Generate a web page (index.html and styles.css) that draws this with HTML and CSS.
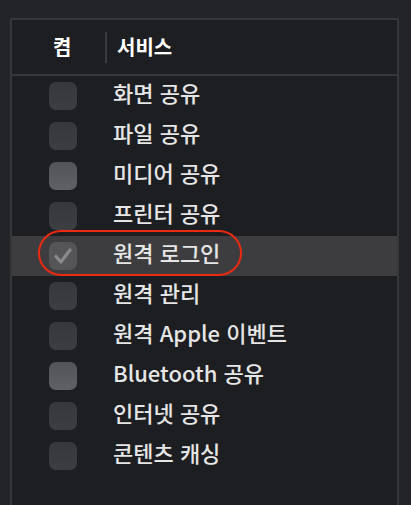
FILE: index.html
```html
<!DOCTYPE html>
<html lang="ko">
<head>
<meta charset="utf-8">
<link rel="stylesheet" href="styles.css">
</head>
<body>
<div class="panel">
  <div class="header">
    <span class="h-on">켬</span>
    <span class="h-div"></span>
    <span class="h-svc">서비스</span>
  </div>
  <div class="rows">
    <div class="row"><span class="cb"></span><span class="label">화면 공유</span></div>
    <div class="row"><span class="cb"></span><span class="label">파일 공유</span></div>
    <div class="row"><span class="cb light"></span><span class="label">미디어 공유</span></div>
    <div class="row"><span class="cb"></span><span class="label">프린터 공유</span></div>
    <div class="row selected">
      <span class="cb checked"><svg viewBox="0 0 28 28" width="28" height="28"><path d="M7 14.5 L11.8 20 L21 8" fill="none" stroke="#8a8a8c" stroke-width="3.2" stroke-linecap="round" stroke-linejoin="round"/></svg></span>
      <span class="label">원격 로그인</span>
      <span class="oval"></span>
    </div>
    <div class="row"><span class="cb"></span><span class="label">원격 관리</span></div>
    <div class="row"><span class="cb"></span><span class="label">원격 Apple 이벤트</span></div>
    <div class="row"><span class="cb light"></span><span class="label">Bluetooth 공유</span></div>
    <div class="row"><span class="cb"></span><span class="label">인터넷 공유</span></div>
    <div class="row"><span class="cb"></span><span class="label">콘텐츠 캐싱</span></div>
  </div>
</div>
</body>
</html>
```
FILE: styles.css
```css
html, body {
  margin: 0;
  padding: 0;
  background: #232428;
  height: 100%;
  overflow: hidden;
  font-family: "Noto Sans CJK KR", "Noto Sans", sans-serif;
}
.panel {
  margin: 18px 0 0 10px;
  width: 385px;
  height: 520px;
  border: 2px solid #36373a;
  background: #1d1e21;
}
.header {
  height: 54px;
  border-bottom: 2px solid #36373a;
  display: flex;
  align-items: center;
  color: #ffffff;
  font-size: 20px;
  font-weight: 700;
  line-height: 1;
}
.h-on {
  margin-left: 41px;
  width: 52px;
}
.h-div {
  width: 2px;
  height: 31px;
  background: #3a3b3e;
}
.h-svc {
  margin-left: 10px;
}
.rows {
  display: flex;
  flex-direction: column;
}
.row {
  position: relative;
  height: 40px;
  display: flex;
  align-items: center;
  padding-left: 37px;
}
.row.selected {
  background: #3d3d3f;
}
.cb {
  width: 28px;
  height: 28px;
  border-radius: 7px;
  background: linear-gradient(#37383b, #3d3e41);
  flex: none;
  display: flex;
}
.cb.light {
  background: linear-gradient(#535457, #606164);
}
.cb.checked {
  background: #555557;
}
.label {
  margin-left: 36px;
  margin-top: -9px;
  color: #e6e6e6;
  font-size: 22px;
  font-weight: 500;
  line-height: 1;
}
.oval {
  position: absolute;
  left: 26px;
  top: -6px;
  width: 200px;
  height: 42px;
  border: 2.5px solid #ec2a10;
  border-radius: 24px;
}
```
